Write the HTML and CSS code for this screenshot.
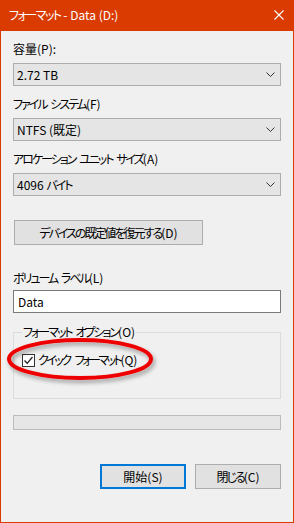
FILE: index.html
```html
<!DOCTYPE html>
<html lang="ja">
<head>
    <meta charset="UTF-8">
    <meta name="viewport" content="width=device-width, initial-scale=1.0">
    <title>フォーマット - Data (D:)</title>
    <link rel="stylesheet" href="styles.css">
</head>
<body>
    <div class="window">
        <div class="titlebar">
            <span class="title"><span class="ja">フォーマット</span> - Data (D:)</span>
            <svg class="close" width="10" height="10" viewBox="0 0 10 10">
                <path d="M0.5 0.5 L9.5 9.5 M9.5 0.5 L0.5 9.5" stroke="#fff" stroke-width="1.1" fill="none"/>
            </svg>
        </div>

        <div class="content">
            <div class="field">
                <div class="label">容量(P):</div>
                <div class="combo">
                    <span>2.72 TB</span>
                    <svg class="chevron" width="9" height="5" viewBox="0 0 9 5"><path d="M0.5 0.5 L4.5 4.5 L8.5 0.5" stroke="#333" fill="none"/></svg>
                </div>
            </div>
            <div class="field">
                <div class="label"><span class="ja">ファイル システム</span>(F)</div>
                <div class="combo">
                    <span>NTFS (既定)</span>
                    <svg class="chevron" width="9" height="5" viewBox="0 0 9 5"><path d="M0.5 0.5 L4.5 4.5 L8.5 0.5" stroke="#333" fill="none"/></svg>
                </div>
            </div>
            <div class="field">
                <div class="label"><span class="ja">アロケーション ユニット サイズ</span>(A)</div>
                <div class="combo">
                    <span>4096 <span class="ja">バイト</span></span>
                    <svg class="chevron" width="9" height="5" viewBox="0 0 9 5"><path d="M0.5 0.5 L4.5 4.5 L8.5 0.5" stroke="#333" fill="none"/></svg>
                </div>
            </div>

            <button class="btn restore"><span class="ja">デバイスの既定値を復元する</span>(D)</button>

            <div class="field volume">
                <div class="label"><span class="ja">ボリューム ラベル</span>(L)</div>
                <div class="textbox">Data</div>
            </div>

            <fieldset class="options">
                <legend><span class="ja">フォーマット オプション</span>(O)</legend>
                <div class="check">
                    <span class="box">
                        <svg width="11" height="11" viewBox="0 0 11 11"><path d="M1.5 5.5 L4.2 8.3 L9.5 2" stroke="#222" stroke-width="1.3" fill="none"/></svg>
                    </span>
                    <span><span class="ja">クイック フォーマット</span>(Q)</span>
                </div>
            </fieldset>

            <div class="progress"></div>

            <div class="actions">
                <button class="btn primary">開始(S)</button>
                <button class="btn"><span class="ja">閉じる</span>(C)</button>
            </div>
        </div>

        <!-- red circle drawn over the quick format option -->
        <svg class="annotation" width="294" height="523" viewBox="0 0 294 523">
            <defs>
                <filter id="shadow" x="-20%" y="-40%" width="140%" height="180%">
                    <feDropShadow dx="2" dy="3" stdDeviation="2" flood-color="#000" flood-opacity="0.35"/>
                </filter>
            </defs>
            <ellipse cx="80" cy="359" rx="71" ry="19" fill="none" stroke="#ee0000" stroke-width="4" filter="url(#shadow)"/>
        </svg>
    </div>
</body>
</html>
```

FILE: styles.css
```css
body {
    margin: 0;
    background-color: #f0f0f0;
    font-family: "Noto Sans CJK JP", "Noto Sans", sans-serif;
    font-size: 12px;
    color: #000;
    font-feature-settings: "palt";
}

/* kana runs are narrower in the Windows UI font */
.ja {
    letter-spacing: -2px;
    word-spacing: 3px;
}

.title .ja {
    letter-spacing: -1.5px;
}

.check .ja {
    letter-spacing: -2.5px;
    word-spacing: 5px;
}

.window {
    position: relative;
    width: 294px;
    height: 523px;
    box-sizing: border-box;
    border: 1px solid #da3b01;
    border-top: none;
    background-color: #f0f0f0;
}

.titlebar {
    height: 31px;
    margin: 0 -1px;
    background-color: #da3b01;
    color: #fff;
    display: flex;
    align-items: center;
    justify-content: space-between;
    padding: 0 10px 0 9px;
}

.title {
    line-height: 16px;
    margin-top: -2px;
}

.close {
    display: block;
    margin-top: -1px;
}

.content {
    padding: 10px 12px 0 12px;
}

.label {
    line-height: 16px;
    margin-bottom: 6px;
}

.field {
    margin-bottom: 10px;
}

.combo {
    height: 23px;
    box-sizing: border-box;
    border: 1px solid #adadad;
    background-color: #e5e5e5;
    display: flex;
    align-items: center;
    justify-content: space-between;
    padding: 0 5px 0 3px;
}

.combo > span {
    line-height: 16px;
}

.chevron {
    display: block;
}

.btn {
    font: inherit;
    font-feature-settings: "palt";
    color: #000;
    background-color: #e1e1e1;
    border: 1px solid #adadad;
    height: 25px;
    padding: 0;
    box-sizing: border-box;
    line-height: 16px;
}

.restore {
    display: block;
    width: 189px;
    margin: 24px 0 0 1px;
}

.volume {
    margin-top: 25px;
}

.volume .label {
    margin-bottom: 4px;
}

.textbox {
    height: 23px;
    box-sizing: border-box;
    border: 1px solid #7a7a7a;
    background-color: #fff;
    padding: 0 4px;
    line-height: 21px;
}

.options {
    margin: 11px 0 0 0;
    padding: 12px 8px 30px 8px;
    border: 1px solid #dcdcdc;
}

.options legend {
    padding: 0 1px;
    line-height: 16px;
}

.check {
    display: flex;
    align-items: center;
    gap: 3px;
    line-height: 16px;
}

.box {
    width: 13px;
    height: 13px;
    box-sizing: border-box;
    border: 1px solid #333;
    background-color: #fff;
    display: flex;
    align-items: center;
    justify-content: center;
}

.box svg {
    display: block;
}

.progress {
    margin-top: 16px;
    height: 15px;
    box-sizing: border-box;
    border: 1px solid #bcbcbc;
    background-color: #e6e6e6;
}

.actions {
    display: flex;
    justify-content: flex-end;
    gap: 9px;
    margin-top: 34px;
}

.actions .btn {
    width: 86px;
}

.primary {
    border: 2px solid #0078d7;
}

.annotation {
    position: absolute;
    top: 0;
    left: -1px;
    pointer-events: none;
}
```
